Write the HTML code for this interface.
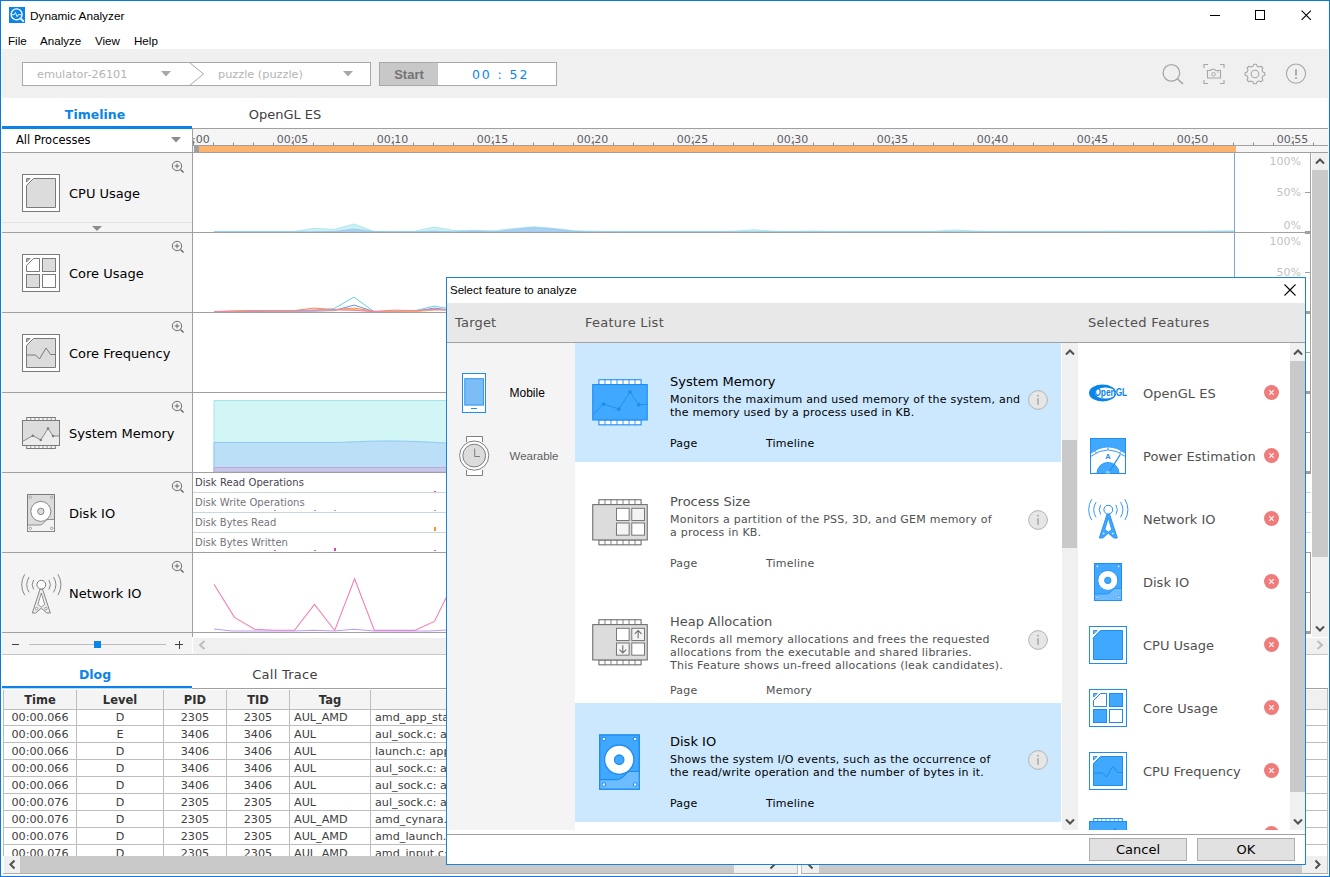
<!DOCTYPE html>
<html lang="en"><head><meta charset="utf-8"><title>Dynamic Analyzer</title>
<style>
html,body{margin:0;padding:0;background:#fff}
body{width:1330px;height:877px;position:relative;overflow:hidden;font-family:"DejaVu Sans","Liberation Sans",sans-serif}
.r{position:absolute}
.t{position:absolute;white-space:nowrap;line-height:1;font-family:"DejaVu Sans","Liberation Sans",sans-serif}
.s{font-family:"Liberation Sans","DejaVu Sans",sans-serif}
svg{overflow:visible;display:block}
.ov{overflow:hidden}
</style></head>
<body>
<div class="r" style="left:0px;top:0px;width:1330px;height:877px;background:#fff;"></div>
<svg style="position:absolute;left:9px;top:7px" width="16" height="16" viewBox="0 0 16 16" ><rect width="16" height="16" fill="#0a84e8"/><circle cx="7.6" cy="7.4" r="5.5" fill="none" stroke="#fff" stroke-width="1.3"/><path d="M11.8 11.6l3 3" stroke="#fff" stroke-width="1.7"/><path d="M2.4 7.7h3l1-2.2 1.7 4.2 1.2-2h3.4" fill="none" stroke="#fff" stroke-width="0.9"/></svg>
<div class="t s" style="left:30px;top:11px;font-size:11.8px;color:#000;">Dynamic Analyzer</div>
<div class="t s" style="left:8px;top:35px;font-size:11.6px;color:#000;">File</div>
<div class="t s" style="left:40px;top:35px;font-size:11.6px;color:#000;">Analyze</div>
<div class="t s" style="left:95px;top:35px;font-size:11.6px;color:#000;">View</div>
<div class="t s" style="left:134px;top:35px;font-size:11.6px;color:#000;">Help</div>
<svg style="position:absolute;left:1205px;top:5px" width="112" height="20" viewBox="0 0 112 20" ><path d="M5 10.5h10" stroke="#000" stroke-width="1"/><rect x="50.5" y="5.5" width="9" height="9" fill="none" stroke="#000" stroke-width="1"/><path d="M96.6 5.6l9.3 9.3M105.9 5.6l-9.3 9.3" stroke="#000" stroke-width="1.1"/></svg>
<div class="r" style="left:2px;top:49px;width:1326px;height:49px;background:#f0f0f0;"></div>
<div class="r" style="left:22px;top:62px;width:349px;height:24px;background:#fff;box-sizing:border-box;border:1px solid #a8a8a8"></div>
<svg style="position:absolute;left:186px;top:62px" width="24" height="24" viewBox="0 0 24 24" ><path d="M3.5 0.5L17.5 12L3.5 23.5" fill="none" stroke="#a8a8a8" stroke-width="1"/></svg>
<div class="t" style="left:37px;top:69px;font-size:11.3px;color:#b4b4b4;">emulator-26101</div>
<div class="t" style="left:218px;top:69px;font-size:11.3px;color:#b4b4b4;">puzzle (puzzle)</div>
<svg style="position:absolute;left:161px;top:71px" width="10" height="6" viewBox="0 0 10 6" ><path d="M0 0h10l-5 5.5z" fill="#a8a8a8"/></svg>
<svg style="position:absolute;left:343px;top:71px" width="10" height="6" viewBox="0 0 10 6" ><path d="M0 0h10l-5 5.5z" fill="#a8a8a8"/></svg>
<div class="r" style="left:379px;top:62px;width:178px;height:24px;background:#fff;box-sizing:border-box;border:1px solid #a8a8a8"></div>
<div class="r" style="left:380px;top:63px;width:58px;height:22px;background:#c8c8c8;"></div>
<div class="t s" style="left:380px;top:68px;font-size:13px;color:#747474;width:58px;text-align:center;font-weight:bold;">Start</div>
<div class="t" style="left:472px;top:69px;font-size:12.5px;color:#0a84e8;letter-spacing:1.9px;">00 : 52</div>
<svg style="position:absolute;left:1160px;top:62px" width="26" height="26" viewBox="0 0 26 26" ><circle cx="11.4" cy="10.9" r="8.3" fill="none" stroke="#a6a6a6" stroke-width="1.3"/><path d="M17.4 16.9L23 22" stroke="#a6a6a6" stroke-width="1.6"/></svg>
<svg style="position:absolute;left:1203px;top:63px" width="22" height="22" viewBox="0 0 22 22" ><path d="M1 5V1.5h4M17 1.5h4V5M21 17v3.5h-4M5 20.5H1V17" fill="none" stroke="#a6a6a6" stroke-width="1.1"/><path d="M4.5 7.5h3l1-1.2h3l1 1.2h5v7.5h-13z" fill="none" stroke="#a6a6a6" stroke-width="1.1"/><circle cx="10.5" cy="11.3" r="1.8" fill="none" stroke="#a6a6a6" stroke-width="1"/><path d="M14 9h1.6" stroke="#a6a6a6"/></svg>
<svg style="position:absolute;left:1243px;top:62px" width="24" height="24" viewBox="0 0 24 24" ><path d="M21.81 10.68L21.81 13.32L19.83 14.08L19.00 16.07L19.87 18.01L18.01 19.87L16.07 19.00L14.08 19.83L13.32 21.81L10.68 21.81L9.92 19.83L7.93 19.00L5.99 19.87L4.13 18.01L5.00 16.07L4.17 14.08L2.19 13.32L2.19 10.68L4.17 9.92L5.00 7.93L4.13 5.99L5.99 4.13L7.93 5.00L9.92 4.17L10.68 2.19L13.32 2.19L14.08 4.17L16.07 5.00L18.01 4.13L19.87 5.99L19.00 7.93L19.83 9.92z" fill="none" stroke="#a6a6a6" stroke-width="1.1" stroke-linejoin="round"/><circle cx="12" cy="12" r="3.8" fill="none" stroke="#a6a6a6" stroke-width="1.1"/></svg>
<svg style="position:absolute;left:1284px;top:62px" width="24" height="24" viewBox="0 0 24 24" ><circle cx="12" cy="11.6" r="9.6" fill="none" stroke="#a6a6a6" stroke-width="1.1"/><path d="M12 7.2v6.3" stroke="#a6a6a6" stroke-width="1.9"/><circle cx="12" cy="16" r="1.1" fill="#a6a6a6"/></svg>
<div class="t" style="left:0px;top:109px;font-size:12.5px;color:#0a84e8;width:190px;text-align:center;font-weight:bold;">Timeline</div>
<div class="t" style="left:190px;top:108px;font-size:13px;color:#404040;width:190px;text-align:center;">OpenGL ES</div>
<div class="r" style="left:2px;top:128px;width:1326px;height:1px;background:#a0a0a0;"></div>
<div class="r" style="left:2px;top:126px;width:190px;height:3px;background:#0a84e8;"></div>
<div class="r" style="left:193px;top:129px;width:1135px;height:23px;background:#f5f5f5;"></div>
<div class="r" style="left:193px;top:145px;width:1135px;height:1px;background:#a0a0a0;"></div>
<div class="r" style="left:194px;top:146px;width:5px;height:6px;background:#a0a0a0;"></div>
<div class="r" style="left:199px;top:146px;width:1037px;height:6px;background:#fdb36c;"></div>
<div class="r" style="left:2px;top:152px;width:1326px;height:1px;background:#a0a0a0;"></div>
<svg style="position:absolute;left:193px;top:129px" width="1135" height="17" viewBox="0 0 1135 17" ><path d="M0.5 11.5v5M20.5 13.5v3M40.5 13.5v3M60.5 13.5v3M80.5 13.5v3M100.5 11.5v5M120.5 13.5v3M140.5 13.5v3M160.5 13.5v3M180.5 13.5v3M200.5 11.5v5M220.5 13.5v3M240.5 13.5v3M260.5 13.5v3M280.5 13.5v3M300.5 11.5v5M320.5 13.5v3M340.5 13.5v3M360.5 13.5v3M380.5 13.5v3M400.5 11.5v5M420.5 13.5v3M440.5 13.5v3M460.5 13.5v3M480.5 13.5v3M500.5 11.5v5M520.5 13.5v3M540.5 13.5v3M560.5 13.5v3M580.5 13.5v3M600.5 11.5v5M620.5 13.5v3M640.5 13.5v3M660.5 13.5v3M680.5 13.5v3M700.5 11.5v5M720.5 13.5v3M740.5 13.5v3M760.5 13.5v3M780.5 13.5v3M800.5 11.5v5M820.5 13.5v3M840.5 13.5v3M860.5 13.5v3M880.5 13.5v3M900.5 11.5v5M920.5 13.5v3M940.5 13.5v3M960.5 13.5v3M980.5 13.5v3M1000.5 11.5v5M1020.5 13.5v3M1040.5 13.5v3M1060.5 13.5v3M1080.5 13.5v3M1100.5 11.5v5M1120.5 13.5v3" stroke="#909090" stroke-width="1" fill="none"/></svg>
<div class="t" style="left:192px;top:134px;font-size:11px;color:#5c5c66;">:00</div>
<div class="t" style="left:262.5px;top:134px;font-size:11px;color:#5c5c66;width:60px;text-align:center;">00;05</div>
<div class="t" style="left:362.5px;top:134px;font-size:11px;color:#5c5c66;width:60px;text-align:center;">00;10</div>
<div class="t" style="left:462.5px;top:134px;font-size:11px;color:#5c5c66;width:60px;text-align:center;">00;15</div>
<div class="t" style="left:562.5px;top:134px;font-size:11px;color:#5c5c66;width:60px;text-align:center;">00;20</div>
<div class="t" style="left:662.5px;top:134px;font-size:11px;color:#5c5c66;width:60px;text-align:center;">00;25</div>
<div class="t" style="left:762.5px;top:134px;font-size:11px;color:#5c5c66;width:60px;text-align:center;">00;30</div>
<div class="t" style="left:862.5px;top:134px;font-size:11px;color:#5c5c66;width:60px;text-align:center;">00;35</div>
<div class="t" style="left:962.5px;top:134px;font-size:11px;color:#5c5c66;width:60px;text-align:center;">00;40</div>
<div class="t" style="left:1062.5px;top:134px;font-size:11px;color:#5c5c66;width:60px;text-align:center;">00;45</div>
<div class="t" style="left:1162.5px;top:134px;font-size:11px;color:#5c5c66;width:60px;text-align:center;">00;50</div>
<div class="t" style="left:1262.5px;top:134px;font-size:11px;color:#5c5c66;width:60px;text-align:center;">00;55</div>
<div class="r" style="left:2px;top:129px;width:190px;height:23px;background:#fff;"></div>
<div class="t" style="left:16px;top:135px;font-size:11.5px;color:#000;">All Processes</div>
<svg style="position:absolute;left:171px;top:137px" width="10" height="6" viewBox="0 0 10 6" ><path d="M0 0h10l-5 5.5z" fill="#8c8c8c"/></svg>
<div class="r" style="left:2px;top:153px;width:190px;height:501px;background:#f4f4f4;"></div>
<div class="r" style="left:192px;top:129px;width:1px;height:508px;background:#a0a0a0;"></div>
<div class="r" style="left:2px;top:232px;width:1309px;height:1px;background:#a0a0a0;"></div>
<div class="t" style="left:69px;top:187px;font-size:13px;color:#000;">CPU Usage</div>
<svg style="position:absolute;left:171px;top:160px" width="14" height="14" viewBox="0 0 14 14" ><circle cx="6" cy="6" r="4.7" fill="none" stroke="#6a6a6a" stroke-width="1"/><path d="M3.6 6h4.8M6 3.6v4.8" stroke="#6a6a6a" stroke-width="1"/><path d="M9.5 9.5l3 3" stroke="#6a6a6a" stroke-width="1.4"/></svg>
<svg style="position:absolute;left:22px;top:174px" width="38" height="38" viewBox="0 0 38 38" ><rect x="0.5" y="0.5" width="37" height="37" fill="#fff" stroke="#7a7a7a"/><path d="M11.5 4.5H33.5V33.5H4.5V11.5z" fill="#dcdcdc" stroke="#7a7a7a"/><path d="M4.5 4.5h3.6l-3.6 3.6z" fill="#7a7a7a" fill-opacity="0.55" stroke="#7a7a7a" stroke-width="0.9"/></svg>
<div class="r" style="left:2px;top:312px;width:1309px;height:1px;background:#a0a0a0;"></div>
<div class="t" style="left:69px;top:267px;font-size:13px;color:#000;">Core Usage</div>
<svg style="position:absolute;left:171px;top:240px" width="14" height="14" viewBox="0 0 14 14" ><circle cx="6" cy="6" r="4.7" fill="none" stroke="#6a6a6a" stroke-width="1"/><path d="M3.6 6h4.8M6 3.6v4.8" stroke="#6a6a6a" stroke-width="1"/><path d="M9.5 9.5l3 3" stroke="#6a6a6a" stroke-width="1.4"/></svg>
<svg style="position:absolute;left:22px;top:254px" width="38" height="38" viewBox="0 0 38 38" ><rect x="0.5" y="0.5" width="37" height="37" fill="#fff" stroke="#7a7a7a"/><path d="M11.5 4.5H17.5V17.5H4.5V11.5z" fill="#fff" stroke="#7a7a7a"/><path d="M4.5 4.5h3.6l-3.6 3.6z" fill="#7a7a7a" fill-opacity="0.55" stroke="#7a7a7a" stroke-width="0.9"/><rect x="20.5" y="4.5" width="13" height="13" fill="#dcdcdc" stroke="#7a7a7a"/><rect x="4.5" y="20.5" width="13" height="13" fill="#dcdcdc" stroke="#7a7a7a"/><rect x="20.5" y="20.5" width="13" height="13" fill="#fff" stroke="#7a7a7a"/></svg>
<div class="r" style="left:2px;top:392px;width:1309px;height:1px;background:#a0a0a0;"></div>
<div class="t" style="left:69px;top:347px;font-size:13px;color:#000;">Core Frequency</div>
<svg style="position:absolute;left:171px;top:320px" width="14" height="14" viewBox="0 0 14 14" ><circle cx="6" cy="6" r="4.7" fill="none" stroke="#6a6a6a" stroke-width="1"/><path d="M3.6 6h4.8M6 3.6v4.8" stroke="#6a6a6a" stroke-width="1"/><path d="M9.5 9.5l3 3" stroke="#6a6a6a" stroke-width="1.4"/></svg>
<svg style="position:absolute;left:22px;top:334px" width="38" height="38" viewBox="0 0 38 38" ><rect x="0.5" y="0.5" width="37" height="37" fill="#fff" stroke="#7a7a7a"/><path d="M11.5 4.5H33.5V33.5H4.5V11.5z" fill="#dcdcdc" stroke="#7a7a7a"/><path d="M4.5 4.5h3.6l-3.6 3.6z" fill="#7a7a7a" fill-opacity="0.55" stroke="#7a7a7a" stroke-width="0.9"/><path d="M4.5 21H13.5L17.5 25L24 14L28.5 20.5H33.5" fill="none" stroke="#7a7a7a" stroke-width="1"/></svg>
<div class="r" style="left:2px;top:472px;width:1309px;height:1px;background:#a0a0a0;"></div>
<div class="t" style="left:69px;top:427px;font-size:13px;color:#000;">System Memory</div>
<svg style="position:absolute;left:171px;top:400px" width="14" height="14" viewBox="0 0 14 14" ><circle cx="6" cy="6" r="4.7" fill="none" stroke="#6a6a6a" stroke-width="1"/><path d="M3.6 6h4.8M6 3.6v4.8" stroke="#6a6a6a" stroke-width="1"/><path d="M9.5 9.5l3 3" stroke="#6a6a6a" stroke-width="1.4"/></svg>
<svg style="position:absolute;left:22px;top:417px" width="38" height="32" viewBox="0 0 38 32" ><rect x="4.7" y="0.50" width="28.6" height="3.0" fill="#f4f4f4" stroke="#7a7a7a" stroke-width="1.0"/><path d="M8.79 0.50v3.0" stroke="#7a7a7a" stroke-width="0.80"/><path d="M12.87 0.50v3.0" stroke="#7a7a7a" stroke-width="0.80"/><path d="M16.96 0.50v3.0" stroke="#7a7a7a" stroke-width="0.80"/><path d="M21.04 0.50v3.0" stroke="#7a7a7a" stroke-width="0.80"/><path d="M25.13 0.50v3.0" stroke="#7a7a7a" stroke-width="0.80"/><path d="M29.21 0.50v3.0" stroke="#7a7a7a" stroke-width="0.80"/><rect x="4.7" y="28.50" width="28.6" height="3.0" fill="#f4f4f4" stroke="#7a7a7a" stroke-width="1.0"/><path d="M8.79 28.50v3.0" stroke="#7a7a7a" stroke-width="0.80"/><path d="M12.87 28.50v3.0" stroke="#7a7a7a" stroke-width="0.80"/><path d="M16.96 28.50v3.0" stroke="#7a7a7a" stroke-width="0.80"/><path d="M21.04 28.50v3.0" stroke="#7a7a7a" stroke-width="0.80"/><path d="M25.13 28.50v3.0" stroke="#7a7a7a" stroke-width="0.80"/><path d="M29.21 28.50v3.0" stroke="#7a7a7a" stroke-width="0.80"/><rect x="0.5" y="3.50" width="37" height="25.0" fill="#dcdcdc" stroke="#7a7a7a" stroke-width="1.0"/><path d="M0.5 24.50L10.8 18.70L18.8 23.00L26 11.50L31 19.00L37.5 19.00L37.5 28.50L0.5 28.50z" fill="#ececec"/><rect x="0.5" y="3.50" width="37" height="25.0" fill="none" stroke="#7a7a7a" stroke-width="1.0"/><path d="M0.5 24.50L10.8 18.70L18.8 23.00L26 11.50L31 19.00L37.5 19.00" fill="none" stroke="#7a7a7a" stroke-width="0.85"/><circle cx="10.8" cy="18.70" r="1.25" fill="#7a7a7a"/><circle cx="18.8" cy="23.00" r="1.25" fill="#7a7a7a"/><circle cx="26" cy="11.50" r="1.25" fill="#7a7a7a"/><circle cx="31" cy="19.00" r="1.25" fill="#7a7a7a"/></svg>
<div class="r" style="left:2px;top:552px;width:1309px;height:1px;background:#a0a0a0;"></div>
<div class="t" style="left:69px;top:507px;font-size:13px;color:#000;">Disk IO</div>
<svg style="position:absolute;left:171px;top:480px" width="14" height="14" viewBox="0 0 14 14" ><circle cx="6" cy="6" r="4.7" fill="none" stroke="#6a6a6a" stroke-width="1"/><path d="M3.6 6h4.8M6 3.6v4.8" stroke="#6a6a6a" stroke-width="1"/><path d="M9.5 9.5l3 3" stroke="#6a6a6a" stroke-width="1.4"/></svg>
<svg style="position:absolute;left:27px;top:494px" width="28" height="38" viewBox="0 0 28 38" ><rect x="0.5" y="0.5" width="27" height="37" fill="#dcdcdc" stroke="#7a7a7a"/><path d="M27.5 25.5H21C18 25.5 17.5 31 12 31H0.5V37.5H27.5z" fill="#f2f2f2" stroke="#7a7a7a" stroke-width="0.8"/><circle cx="13.8" cy="17.4" r="10" fill="#fff" stroke="#7a7a7a" stroke-width="0.9"/><circle cx="13.8" cy="17.4" r="3.2" fill="#dcdcdc" stroke="#7a7a7a" stroke-width="0.9"/><circle cx="3.3" cy="3.3" r="1.2" fill="#fff" stroke="#7a7a7a" stroke-width="0.7"/><circle cx="24.7" cy="3.3" r="1.2" fill="#fff" stroke="#7a7a7a" stroke-width="0.7"/><circle cx="3.3" cy="34.3" r="1.2" fill="#fff" stroke="#7a7a7a" stroke-width="0.7"/><circle cx="24.7" cy="34.3" r="1.2" fill="#fff" stroke="#7a7a7a" stroke-width="0.7"/></svg>
<div class="r" style="left:2px;top:632px;width:1309px;height:1px;background:#a0a0a0;"></div>
<div class="t" style="left:69px;top:587px;font-size:13px;color:#000;">Network IO</div>
<svg style="position:absolute;left:171px;top:560px" width="14" height="14" viewBox="0 0 14 14" ><circle cx="6" cy="6" r="4.7" fill="none" stroke="#6a6a6a" stroke-width="1"/><path d="M3.6 6h4.8M6 3.6v4.8" stroke="#6a6a6a" stroke-width="1"/><path d="M9.5 9.5l3 3" stroke="#6a6a6a" stroke-width="1.4"/></svg>
<svg style="position:absolute;left:20.5px;top:574px" width="41" height="40" viewBox="0 0 41 40" ><path d="M12.67 5.93A9.0 9.0 0 0 0 12.67 15.47" fill="none" stroke="#7a7a7a" stroke-width="0.9"/><path d="M27.93 5.93A9.0 9.0 0 0 1 27.93 15.47" fill="none" stroke="#7a7a7a" stroke-width="0.9"/><path d="M8.09 3.07A14.4 14.4 0 0 0 8.09 18.33" fill="none" stroke="#7a7a7a" stroke-width="0.9"/><path d="M32.51 3.07A14.4 14.4 0 0 1 32.51 18.33" fill="none" stroke="#7a7a7a" stroke-width="0.9"/><path d="M3.68 0.31A19.6 19.6 0 0 0 3.68 21.09" fill="none" stroke="#7a7a7a" stroke-width="0.9"/><path d="M36.92 0.31A19.6 19.6 0 0 1 36.92 21.09" fill="none" stroke="#7a7a7a" stroke-width="0.9"/><path d="M19.1 15L11.3 39H14.700000000000001L20.3 34.2L25.9 39H29.3L21.5 15z" fill="#ececec" stroke="#7a7a7a" stroke-width="0.9" stroke-linejoin="round"/><path d="M20.3 19L16.900000000000002 30.5L20.3 33L23.7 30.5z" fill="#fff" stroke="#7a7a7a" stroke-width="0.8" stroke-linejoin="round"/><circle cx="15.700000000000001" cy="34.6" r="1.25" fill="#fff" stroke="#7a7a7a" stroke-width="0.7"/><circle cx="24.9" cy="34.6" r="1.25" fill="#fff" stroke="#7a7a7a" stroke-width="0.7"/><circle cx="20.3" cy="10.7" r="4.4" fill="#fff" stroke="#7a7a7a" stroke-width="1"/></svg>
<div class="r" style="left:2px;top:222px;width:190px;height:1px;background:#e2e2e2;"></div>
<svg style="position:absolute;left:92px;top:226px" width="10" height="5" viewBox="0 0 10 5" ><path d="M0 0h10l-5 5z" fill="#8c8c8c"/></svg>
<svg style="position:absolute;left:0px;top:0px" width="1330" height="877" viewBox="0 0 1330 877" class="ov"><path d="M214 232L214 231.4L234 231.4L254 231.4L274 231.4L294 231.4L314 228.4L334 229.4L354 224.0L374 231.4L394 231.4L414 231.4L434 227.0L454 230.5L474 230.4L494 230.8L514 228.5L534 226.8L554 228.4L574 230.8L594 231.2L614 231.4L634 231.4L654 231.4L674 231.4L694 231.4L714 231.4L734 231.2L754 229.8L774 231.2L794 231.4L814 231.0L834 231.4L854 231.4L874 231.4L894 231.4L914 231.4L934 231.4L954 230.0L974 231.0L994 231.4L1014 231.4L1034 231.4L1054 231.4L1074 231.4L1094 231.4L1114 231.1L1134 231.4L1154 231.4L1174 231.4L1194 231.4L1214 231.0L1234 230.8L1234 232z" fill="#c8f0f0" fill-opacity="0.9" stroke="#9fe3e6" stroke-width="0.8"/><path d="M214 232L214 232.0L234 232.0L254 232.0L274 232.0L294 232.0L314 232.0L334 231.4L354 229.0L374 231.6L394 232.0L414 232.0L434 231.0L454 232.0L474 230.8L494 232.0L514 229.4L534 227.4L554 229.0L574 231.2L594 232.0L614 232.0L634 232.0L654 232.0L674 232.0L694 232.0L714 232.0L734 232.0L754 232.0L774 232.0L794 232.0L814 232.0L834 232.0L854 232.0L874 232.0L894 232.0L914 232.0L934 232.0L954 232.0L974 232.0L994 232.0L1014 232.0L1034 232.0L1054 232.0L1074 232.0L1094 232.0L1114 232.0L1134 232.0L1154 232.0L1174 232.0L1194 232.0L1214 232.0L1234 232.0L1234 232z" fill="#a8cdf0" fill-opacity="0.9" stroke="#90bdf0" stroke-width="0.6"/><path d="M214 311.6L234 311.4L254 311.1L274 311.1L294 311.1L314 310.4L334 308.6L354 297.1L374 311.6L394 311.1L414 311.0L434 306.1L454 309.6L474 310.6L494 310.1L514 307.6L534 305.6L554 307.6L574 310.6" fill="none" stroke="#5fd4dc" stroke-width="1"/><path d="M214 311.6L234 311.6L254 311.4L274 311.1L294 311.1L314 311.1L334 310.6L354 305.1L374 311.6L394 311.6L414 311.6L434 308.1L454 310.6L474 309.6L494 310.6L514 308.6L534 306.6L554 309.6L574 310.6" fill="none" stroke="#6c8df0" stroke-width="1"/><path d="M214 311.4L234 311.1L254 310.6L274 310.6L294 310.6L314 308.1L334 309.6L354 308.1L374 311.2L394 311.6L414 311.6L434 309.1L454 310.6L474 310.6L494 309.6L514 309.6L534 308.6L554 309.6L574 311.1" fill="none" stroke="#f08c50" stroke-width="1"/><path d="M214 311.6L234 311.3L254 311.0L274 311.0L294 311.0L314 310.1L334 310.1L354 309.6L374 311.6L394 311.1L414 311.6L434 310.1L454 309.6L474 310.6L494 310.6L514 309.6L534 309.6L554 310.6L574 311.1" fill="none" stroke="#f6b23c" stroke-width="1"/><path d="M214 311.8L234 311.1L254 310.6L274 310.6L294 310.6L314 310.1L334 309.6L354 310.4L374 311.6L394 310.1L414 310.6L434 309.6L454 310.1L474 310.6L494 310.6L514 310.1L534 309.6L554 310.6L574 311.1" fill="none" stroke="#f080c0" stroke-width="1"/><path d="M214 472V400.5H460V472z" fill="#d2f5f5" stroke="#a5e6e8" stroke-width="1"/><path d="M214 472V442.5H330C350 442.5 360 441 390 441C410 441 430 442 460 444V472z" fill="#badff6" stroke="#92c8f2" stroke-width="1"/><path d="M214 472V467.5H460V472z" fill="#c5c8e8" stroke="#c0a8d8" stroke-width="1"/><path d="M214 584.2L234.5 617.4L254.5 629.2L274 630.3L294.5 630.3L314.5 604.3L334.7 630.5L354.6 578.7L374.4 630.4L394 630.4L414.6 630.4L434.4 621.4L454 582" fill="none" stroke="#f27fb4" stroke-width="1.1"/><path d="M214 629L232 631L294 631L314 630.2L334 631L354 629.3L374 631L430 631L454 629.5" fill="none" stroke="#c09af4" stroke-width="1.05"/></svg>
<div class="r" style="left:193px;top:232px;width:1118px;height:1px;background:#a0a0a0;"></div>
<div class="r" style="left:193px;top:312px;width:1118px;height:1px;background:#a0a0a0;"></div>
<div class="r" style="left:193px;top:392px;width:1118px;height:1px;background:#a0a0a0;"></div>
<div class="r" style="left:193px;top:472px;width:1118px;height:1px;background:#a0a0a0;"></div>
<div class="r" style="left:193px;top:552px;width:1118px;height:1px;background:#a0a0a0;"></div>
<div class="r" style="left:193px;top:632px;width:1118px;height:1px;background:#a0a0a0;"></div>
<div class="r" style="left:193px;top:492px;width:1118px;height:1px;background:#c9d6dd;"></div>
<div class="t" style="left:195px;top:478px;font-size:10px;color:#45454f;letter-spacing:0.05px;">Disk Read Operations</div>
<div class="r" style="left:193px;top:512px;width:1118px;height:1px;background:#c9d6dd;"></div>
<div class="t" style="left:195px;top:498px;font-size:10px;color:#74747c;letter-spacing:0.02px;">Disk Write Operations</div>
<div class="r" style="left:193px;top:532px;width:1118px;height:1px;background:#c9d6dd;"></div>
<div class="t" style="left:195px;top:518px;font-size:10px;color:#74747c;letter-spacing:0.02px;">Disk Bytes Read</div>
<div class="t" style="left:195px;top:538px;font-size:10px;color:#74747c;letter-spacing:0.02px;">Disk Bytes Written</div>
<div class="r" style="left:434px;top:491px;width:2px;height:1px;background:#e0508c;"></div>
<div class="r" style="left:274px;top:510px;width:2px;height:1px;background:#b98cf2;"></div>
<div class="r" style="left:314px;top:510px;width:2px;height:1px;background:#b98cf2;"></div>
<div class="r" style="left:334px;top:510px;width:2px;height:1px;background:#b98cf2;"></div>
<div class="r" style="left:434px;top:510px;width:2px;height:1px;background:#b98cf2;"></div>
<div class="r" style="left:434px;top:527px;width:2px;height:4px;background:#f6962c;"></div>
<div class="r" style="left:274px;top:550px;width:2px;height:1px;background:#e060c0;"></div>
<div class="r" style="left:314px;top:550px;width:2px;height:1px;background:#e060c0;"></div>
<div class="r" style="left:334px;top:548px;width:2px;height:3px;background:#e040b0;"></div>
<div class="r" style="left:434px;top:550px;width:2px;height:1px;background:#e060c0;"></div>
<div class="r" style="left:1234px;top:153px;width:1px;height:480px;background:#7ba9d3;"></div>
<div class="r" style="left:1310px;top:153px;width:1px;height:320px;background:#a0a0a0;"></div>
<div class="r" style="left:1310px;top:553px;width:1px;height:80px;background:#a0a0a0;"></div>
<div class="t" style="left:1241px;top:156px;font-size:11px;color:#c2c2c2;width:60px;text-align:right;">100%</div>
<div class="t" style="left:1241px;top:187px;font-size:11px;color:#c2c2c2;width:60px;text-align:right;">50%</div>
<div class="t" style="left:1241px;top:220px;font-size:11px;color:#c2c2c2;width:60px;text-align:right;">0%</div>
<div class="r" style="left:1305px;top:192px;width:5px;height:1px;background:#a0a0a0;"></div>
<div class="r" style="left:1305px;top:231px;width:6px;height:3px;background:#a0a0a0;"></div>
<div class="t" style="left:1241px;top:236px;font-size:11px;color:#c2c2c2;width:60px;text-align:right;">100%</div>
<div class="t" style="left:1241px;top:267px;font-size:11px;color:#c2c2c2;width:60px;text-align:right;">50%</div>
<div class="t" style="left:1241px;top:300px;font-size:11px;color:#c2c2c2;width:60px;text-align:right;">0%</div>
<div class="r" style="left:1305px;top:272px;width:5px;height:1px;background:#a0a0a0;"></div>
<div class="r" style="left:1305px;top:311px;width:6px;height:3px;background:#a0a0a0;"></div>
<div class="t" style="left:1241px;top:316px;font-size:11px;color:#c2c2c2;width:60px;text-align:right;">100%</div>
<div class="t" style="left:1241px;top:347px;font-size:11px;color:#c2c2c2;width:60px;text-align:right;">50%</div>
<div class="t" style="left:1241px;top:380px;font-size:11px;color:#c2c2c2;width:60px;text-align:right;">0%</div>
<div class="r" style="left:1305px;top:352px;width:5px;height:1px;background:#a0a0a0;"></div>
<div class="r" style="left:1305px;top:391px;width:6px;height:3px;background:#a0a0a0;"></div>
<div class="t" style="left:1241px;top:396px;font-size:11px;color:#c2c2c2;width:60px;text-align:right;">100%</div>
<div class="t" style="left:1241px;top:427px;font-size:11px;color:#c2c2c2;width:60px;text-align:right;">50%</div>
<div class="t" style="left:1241px;top:460px;font-size:11px;color:#c2c2c2;width:60px;text-align:right;">0%</div>
<div class="r" style="left:1305px;top:432px;width:5px;height:1px;background:#a0a0a0;"></div>
<div class="r" style="left:1305px;top:471px;width:6px;height:3px;background:#a0a0a0;"></div>
<div class="t" style="left:1241px;top:556px;font-size:11px;color:#c2c2c2;width:60px;text-align:right;">100%</div>
<div class="t" style="left:1241px;top:587px;font-size:11px;color:#c2c2c2;width:60px;text-align:right;">50%</div>
<div class="t" style="left:1241px;top:620px;font-size:11px;color:#c2c2c2;width:60px;text-align:right;">0%</div>
<div class="r" style="left:1305px;top:592px;width:5px;height:1px;background:#a0a0a0;"></div>
<div class="r" style="left:1305px;top:631px;width:6px;height:3px;background:#a0a0a0;"></div>
<div class="r" style="left:1312px;top:153px;width:16px;height:484px;background:#f0f0f0;"></div>
<div class="r" style="left:1312px;top:170px;width:16px;height:387px;background:#c9c9c9;"></div>
<svg style="position:absolute;left:1315px;top:157px" width="10" height="8" viewBox="0 0 10 8" ><path d="M1 6.5L5 2.5L9 6.5" fill="none" stroke="#505050" stroke-width="2"/></svg>
<svg style="position:absolute;left:1315px;top:624.5px" width="10" height="8" viewBox="0 0 10 8" ><path d="M1 1.5L5 5.5L9 1.5" fill="none" stroke="#505050" stroke-width="2"/></svg>
<div class="r" style="left:193px;top:638px;width:1135px;height:16px;background:#f0f0f0;"></div>
<div class="r" style="left:2px;top:654px;width:1326px;height:1px;background:#c6c6c6;"></div>
<div class="r" style="left:12px;top:644px;width:7px;height:1px;background:#404040;"></div>
<div class="r" style="left:29px;top:644px;width:137px;height:1px;background:#bcbcbc;"></div>
<div class="r" style="left:94px;top:641px;width:7px;height:7px;background:#0a84e8;"></div>
<div class="r" style="left:175px;top:644px;width:8px;height:1px;background:#404040;"></div>
<div class="r" style="left:178.5px;top:640.5px;width:1px;height:8px;background:#404040;"></div>
<svg style="position:absolute;left:198px;top:640px" width="8" height="10" viewBox="0 0 8 10" ><path d="M6.5 1L2 5L6.5 9" fill="none" stroke="#bdbdbd" stroke-width="2"/></svg>
<svg style="position:absolute;left:1316px;top:640px" width="8" height="10" viewBox="0 0 8 10" ><path d="M1.5 1L6 5L1.5 9" fill="none" stroke="#bdbdbd" stroke-width="2"/></svg>
<div class="t" style="left:0px;top:669px;font-size:12.5px;color:#0a84e8;width:190px;text-align:center;font-weight:bold;">Dlog</div>
<div class="t" style="left:190px;top:668px;font-size:13px;color:#404040;width:190px;text-align:center;letter-spacing:0.25px;">Call Trace</div>
<div class="r" style="left:192px;top:688px;width:606px;height:1px;background:#a0a0a0;"></div>
<div class="r" style="left:2px;top:686px;width:190px;height:2px;background:#0a84e8;"></div>
<div class="r" style="left:2px;top:688px;width:190px;height:1px;background:#b9dbf8;"></div>
<div class="r" style="left:3px;top:690px;width:795px;height:19px;background:#f4f4f4;"></div>
<div class="r" style="left:3px;top:690px;width:1px;height:166px;background:#bdbdbd;"></div>
<div class="r" style="left:76px;top:690px;width:1px;height:166px;background:#bdbdbd;"></div>
<div class="r" style="left:163px;top:690px;width:1px;height:166px;background:#bdbdbd;"></div>
<div class="r" style="left:226px;top:690px;width:1px;height:166px;background:#bdbdbd;"></div>
<div class="r" style="left:289px;top:690px;width:1px;height:166px;background:#bdbdbd;"></div>
<div class="r" style="left:370px;top:690px;width:1px;height:166px;background:#bdbdbd;"></div>
<div class="r" style="left:797px;top:689px;width:1px;height:185px;background:#bdbdbd;"></div>
<div class="r" style="left:3px;top:709px;width:795px;height:1px;background:#bdbdbd;"></div>
<div class="r" style="left:3px;top:725px;width:795px;height:1px;background:#bdbdbd;"></div>
<div class="r" style="left:3px;top:742px;width:795px;height:1px;background:#bdbdbd;"></div>
<div class="r" style="left:3px;top:759px;width:795px;height:1px;background:#bdbdbd;"></div>
<div class="r" style="left:3px;top:776px;width:795px;height:1px;background:#bdbdbd;"></div>
<div class="r" style="left:3px;top:793px;width:795px;height:1px;background:#bdbdbd;"></div>
<div class="r" style="left:3px;top:810px;width:795px;height:1px;background:#bdbdbd;"></div>
<div class="r" style="left:3px;top:827px;width:795px;height:1px;background:#bdbdbd;"></div>
<div class="r" style="left:3px;top:844px;width:795px;height:1px;background:#bdbdbd;"></div>
<div class="t" style="left:4px;top:695px;font-size:11.5px;color:#303030;width:72px;text-align:center;font-weight:bold;">Time</div>
<div class="t" style="left:77px;top:695px;font-size:11.5px;color:#303030;width:86px;text-align:center;font-weight:bold;">Level</div>
<div class="t" style="left:164px;top:695px;font-size:11.5px;color:#303030;width:62px;text-align:center;font-weight:bold;">PID</div>
<div class="t" style="left:227px;top:695px;font-size:11.5px;color:#303030;width:62px;text-align:center;font-weight:bold;">TID</div>
<div class="t" style="left:290px;top:695px;font-size:11.5px;color:#303030;width:80px;text-align:center;font-weight:bold;">Tag</div>
<div class="r" style="left:3px;top:709px;width:795px;height:147px;overflow:hidden"><div class="t" style="left:1px;top:3px;font-size:11.2px;color:#404040;width:72px;text-align:center;">00:00.066</div><div class="t" style="left:74px;top:3px;font-size:11.2px;color:#404040;width:86px;text-align:center;">D</div><div class="t" style="left:161px;top:3px;font-size:11.2px;color:#404040;width:62px;text-align:center;">2305</div><div class="t" style="left:224px;top:3px;font-size:11.2px;color:#404040;width:62px;text-align:center;">2305</div><div class="t" style="left:291px;top:3px;font-size:11.2px;color:#404040;">AUL_AMD</div><div class="t" style="left:372px;top:3px;font-size:11.2px;color:#404040;">amd_app_status.c: app status</div><div class="t" style="left:1px;top:20px;font-size:11.2px;color:#404040;width:72px;text-align:center;">00:00.066</div><div class="t" style="left:74px;top:20px;font-size:11.2px;color:#404040;width:86px;text-align:center;">E</div><div class="t" style="left:161px;top:20px;font-size:11.2px;color:#404040;width:62px;text-align:center;">3406</div><div class="t" style="left:224px;top:20px;font-size:11.2px;color:#404040;width:62px;text-align:center;">3406</div><div class="t" style="left:291px;top:20px;font-size:11.2px;color:#404040;">AUL</div><div class="t" style="left:372px;top:20px;font-size:11.2px;color:#404040;">aul_sock.c: aul_sock_send_raw</div><div class="t" style="left:1px;top:37px;font-size:11.2px;color:#404040;width:72px;text-align:center;">00:00.066</div><div class="t" style="left:74px;top:37px;font-size:11.2px;color:#404040;width:86px;text-align:center;">D</div><div class="t" style="left:161px;top:37px;font-size:11.2px;color:#404040;width:62px;text-align:center;">3406</div><div class="t" style="left:224px;top:37px;font-size:11.2px;color:#404040;width:62px;text-align:center;">3406</div><div class="t" style="left:291px;top:37px;font-size:11.2px;color:#404040;">AUL</div><div class="t" style="left:372px;top:37px;font-size:11.2px;color:#404040;">launch.c: app_request_to_launchpad</div><div class="t" style="left:1px;top:54px;font-size:11.2px;color:#404040;width:72px;text-align:center;">00:00.066</div><div class="t" style="left:74px;top:54px;font-size:11.2px;color:#404040;width:86px;text-align:center;">D</div><div class="t" style="left:161px;top:54px;font-size:11.2px;color:#404040;width:62px;text-align:center;">3406</div><div class="t" style="left:224px;top:54px;font-size:11.2px;color:#404040;width:62px;text-align:center;">3406</div><div class="t" style="left:291px;top:54px;font-size:11.2px;color:#404040;">AUL</div><div class="t" style="left:372px;top:54px;font-size:11.2px;color:#404040;">aul_sock.c: aul_sock_create_client</div><div class="t" style="left:1px;top:71px;font-size:11.2px;color:#404040;width:72px;text-align:center;">00:00.066</div><div class="t" style="left:74px;top:71px;font-size:11.2px;color:#404040;width:86px;text-align:center;">D</div><div class="t" style="left:161px;top:71px;font-size:11.2px;color:#404040;width:62px;text-align:center;">3406</div><div class="t" style="left:224px;top:71px;font-size:11.2px;color:#404040;width:62px;text-align:center;">3406</div><div class="t" style="left:291px;top:71px;font-size:11.2px;color:#404040;">AUL</div><div class="t" style="left:372px;top:71px;font-size:11.2px;color:#404040;">aul_sock.c: aul_sock_send_raw</div><div class="t" style="left:1px;top:88px;font-size:11.2px;color:#404040;width:72px;text-align:center;">00:00.076</div><div class="t" style="left:74px;top:88px;font-size:11.2px;color:#404040;width:86px;text-align:center;">D</div><div class="t" style="left:161px;top:88px;font-size:11.2px;color:#404040;width:62px;text-align:center;">2305</div><div class="t" style="left:224px;top:88px;font-size:11.2px;color:#404040;width:62px;text-align:center;">2305</div><div class="t" style="left:291px;top:88px;font-size:11.2px;color:#404040;">AUL</div><div class="t" style="left:372px;top:88px;font-size:11.2px;color:#404040;">aul_sock.c: aul_sock_recv</div><div class="t" style="left:1px;top:105px;font-size:11.2px;color:#404040;width:72px;text-align:center;">00:00.076</div><div class="t" style="left:74px;top:105px;font-size:11.2px;color:#404040;width:86px;text-align:center;">D</div><div class="t" style="left:161px;top:105px;font-size:11.2px;color:#404040;width:62px;text-align:center;">2305</div><div class="t" style="left:224px;top:105px;font-size:11.2px;color:#404040;width:62px;text-align:center;">2305</div><div class="t" style="left:291px;top:105px;font-size:11.2px;color:#404040;">AUL_AMD</div><div class="t" style="left:372px;top:105px;font-size:11.2px;color:#404040;">amd_cynara.c: check privilege</div><div class="t" style="left:1px;top:122px;font-size:11.2px;color:#404040;width:72px;text-align:center;">00:00.076</div><div class="t" style="left:74px;top:122px;font-size:11.2px;color:#404040;width:86px;text-align:center;">D</div><div class="t" style="left:161px;top:122px;font-size:11.2px;color:#404040;width:62px;text-align:center;">2305</div><div class="t" style="left:224px;top:122px;font-size:11.2px;color:#404040;width:62px;text-align:center;">2305</div><div class="t" style="left:291px;top:122px;font-size:11.2px;color:#404040;">AUL_AMD</div><div class="t" style="left:372px;top:122px;font-size:11.2px;color:#404040;">amd_launch.c: launch request</div><div class="t" style="left:1px;top:139px;font-size:11.2px;color:#404040;width:72px;text-align:center;">00:00.076</div><div class="t" style="left:74px;top:139px;font-size:11.2px;color:#404040;width:86px;text-align:center;">D</div><div class="t" style="left:161px;top:139px;font-size:11.2px;color:#404040;width:62px;text-align:center;">2305</div><div class="t" style="left:224px;top:139px;font-size:11.2px;color:#404040;width:62px;text-align:center;">2305</div><div class="t" style="left:291px;top:139px;font-size:11.2px;color:#404040;">AUL_AMD</div><div class="t" style="left:372px;top:139px;font-size:11.2px;color:#404040;">amd_input.c: input lock</div></div>
<div class="r" style="left:802px;top:688px;width:526px;height:1px;background:#a0a0a0;"></div>
<div class="r" style="left:802px;top:690px;width:525px;height:19px;background:#f0f0f0;"></div>
<div class="r" style="left:801px;top:689px;width:1px;height:185px;background:#bdbdbd;"></div>
<div class="r" style="left:1327px;top:689px;width:1px;height:185px;background:#bdbdbd;"></div>
<div class="r" style="left:802px;top:709px;width:525px;height:1px;background:#bdbdbd;"></div>
<div class="r" style="left:802px;top:725px;width:525px;height:1px;background:#bdbdbd;"></div>
<div class="r" style="left:802px;top:742px;width:525px;height:1px;background:#bdbdbd;"></div>
<div class="r" style="left:802px;top:759px;width:525px;height:1px;background:#bdbdbd;"></div>
<div class="r" style="left:802px;top:776px;width:525px;height:1px;background:#bdbdbd;"></div>
<div class="r" style="left:802px;top:793px;width:525px;height:1px;background:#bdbdbd;"></div>
<div class="r" style="left:802px;top:810px;width:525px;height:1px;background:#bdbdbd;"></div>
<div class="r" style="left:802px;top:827px;width:525px;height:1px;background:#bdbdbd;"></div>
<div class="r" style="left:802px;top:844px;width:525px;height:1px;background:#bdbdbd;"></div>
<div class="r" style="left:4px;top:856px;width:793px;height:17px;background:#f0f0f0;"></div>
<div class="r" style="left:802px;top:856px;width:525px;height:17px;background:#f0f0f0;"></div>
<div class="r" style="left:20px;top:856px;width:714px;height:17px;background:#c9c9c9;"></div>
<div class="r" style="left:819px;top:856px;width:483px;height:17px;background:#c9c9c9;"></div>
<div class="r" style="left:3px;top:873px;width:795px;height:1px;background:#b0b0b0;"></div>
<div class="r" style="left:801px;top:873px;width:527px;height:1px;background:#b0b0b0;"></div>
<svg style="position:absolute;left:8px;top:859px" width="8" height="11" viewBox="0 0 8 11" ><path d="M6.5 1.5L2.5 5.5L6.5 9.5" fill="none" stroke="#505050" stroke-width="2"/></svg>
<svg style="position:absolute;left:806px;top:859px" width="8" height="11" viewBox="0 0 8 11" ><path d="M6.5 1.5L2.5 5.5L6.5 9.5" fill="none" stroke="#505050" stroke-width="2"/></svg>
<svg style="position:absolute;left:769px;top:859px" width="8" height="11" viewBox="0 0 8 11" ><path d="M1.5 1.5L5.5 5.5L1.5 9.5" fill="none" stroke="#505050" stroke-width="2"/></svg>
<svg style="position:absolute;left:1314px;top:859px" width="8" height="11" viewBox="0 0 8 11" ><path d="M1.5 1.5L5.5 5.5L1.5 9.5" fill="none" stroke="#505050" stroke-width="2"/></svg>
<div class="r" style="left:446px;top:277px;width:858px;height:586px;background:#fff;border:1px solid #1883d7"><div class="t s" style="left:3px;top:7px;font-size:11.5px;color:#000;">Select feature to analyze</div>
<svg style="position:absolute;left:837px;top:6px" width="12" height="12" viewBox="0 0 12 12" ><path d="M0.5 0.5l11 11M11.5 0.5l-11 11" stroke="#000" stroke-width="1.1"/></svg>
<div class="r" style="left:0px;top:25px;width:858px;height:39px;background:#e8e8e8;"></div>
<div class="r" style="left:0px;top:64px;width:858px;height:1px;background:#a0a0a0;"></div>
<div class="t" style="left:8px;top:38px;font-size:13px;color:#505050;letter-spacing:0.2px;">Target</div>
<div class="t" style="left:138px;top:38px;font-size:13px;color:#505050;letter-spacing:0.25px;">Feature List</div>
<div class="t" style="left:641px;top:38px;font-size:13px;color:#505050;letter-spacing:0.3px;">Selected Features</div>
<div class="r" style="left:0px;top:65px;width:128px;height:487px;background:#f4f4f4;"></div>
<svg style="position:absolute;left:15px;top:95px" width="24" height="40" viewBox="0 0 24 40" ><rect x="0.5" y="0.5" width="23" height="39" fill="#fff" stroke="#1e8df2"/><rect x="2.8" y="5.7" width="18.6" height="26.4" fill="#7dbdf6" stroke="#1e8df2" stroke-width="0.9"/><path d="M9 35.5h6" stroke="#1e8df2" stroke-width="1"/></svg>
<div class="t s" style="left:62.5px;top:109px;font-size:12px;color:#000;">Mobile</div>
<svg style="position:absolute;left:12px;top:158px" width="30" height="40" viewBox="0 0 30 40" ><path d="M7.5 6V0.5H23.5V6M7.5 34V39.5H23.5V34" fill="#fff" stroke="#707070" stroke-width="0.9"/><circle cx="15.2" cy="19.6" r="14.6" fill="#fff" stroke="#707070" stroke-width="0.9"/><circle cx="15.2" cy="19.6" r="11.4" fill="#dcdcdc" stroke="#707070" stroke-width="0.9"/><path d="M15.7 12.5V20.5H21" fill="none" stroke="#707070" stroke-width="0.9"/></svg>
<div class="t s" style="left:62.5px;top:173px;font-size:11.5px;color:#5e5e5e;">Wearable</div>
<div class="r" style="left:128px;top:65px;width:486px;height:119px;background:#cce8ff;"></div>
<svg style="position:absolute;left:145px;top:100.60000000000002px" width="56" height="46.87" viewBox="0 0 38 31.8" ><rect x="4.7" y="0.50" width="28.6" height="3.3" fill="#fff" stroke="#1e8df2" stroke-width="0.75"/><path d="M8.79 0.50v3.3" stroke="#1e8df2" stroke-width="0.60"/><path d="M12.87 0.50v3.3" stroke="#1e8df2" stroke-width="0.60"/><path d="M16.96 0.50v3.3" stroke="#1e8df2" stroke-width="0.60"/><path d="M21.04 0.50v3.3" stroke="#1e8df2" stroke-width="0.60"/><path d="M25.13 0.50v3.3" stroke="#1e8df2" stroke-width="0.60"/><path d="M29.21 0.50v3.3" stroke="#1e8df2" stroke-width="0.60"/><rect x="4.7" y="27.80" width="28.6" height="3.3" fill="#fff" stroke="#1e8df2" stroke-width="0.75"/><path d="M8.79 27.80v3.3" stroke="#1e8df2" stroke-width="0.60"/><path d="M12.87 27.80v3.3" stroke="#1e8df2" stroke-width="0.60"/><path d="M16.96 27.80v3.3" stroke="#1e8df2" stroke-width="0.60"/><path d="M21.04 27.80v3.3" stroke="#1e8df2" stroke-width="0.60"/><path d="M25.13 27.80v3.3" stroke="#1e8df2" stroke-width="0.60"/><path d="M29.21 27.80v3.3" stroke="#1e8df2" stroke-width="0.60"/><rect x="0.5" y="3.80" width="37" height="24.0" fill="#41a8ff" stroke="#1e8df2" stroke-width="0.75"/><path d="M0.5 24.30L7.8 17.00L18.2 20.40L25.8 8.80L31.7 17.40L37.5 17.40" fill="none" stroke="#1e8df2" stroke-width="0.64"/><circle cx="7.8" cy="17.00" r="1.25" fill="#1e8df2"/><circle cx="18.2" cy="20.40" r="1.25" fill="#1e8df2"/><circle cx="25.8" cy="8.80" r="1.25" fill="#1e8df2"/><circle cx="31.7" cy="17.40" r="1.25" fill="#1e8df2"/></svg>
<div class="t" style="left:223px;top:97px;font-size:13px;color:#000;">System Memory</div>
<div class="t" style="left:223px;top:116px;font-size:11px;color:#000;letter-spacing:0.22px;">Monitors the maximum and used memory of the system, and</div>
<div class="t" style="left:223px;top:129px;font-size:11px;color:#000;letter-spacing:0.22px;">the memory used by a process used in KB.</div>
<div class="t" style="left:223px;top:160px;font-size:11px;color:#000;letter-spacing:0.2px;">Page</div>
<div class="t" style="left:319px;top:160px;font-size:11px;color:#000;letter-spacing:0.2px;">Timeline</div>
<svg style="position:absolute;left:581px;top:112px" width="20" height="20" viewBox="0 0 20 20" ><circle cx="10" cy="10" r="9.4" fill="#e6e6e6" stroke="#b4b4b4" stroke-width="1"/><path d="M10 8.3v6.4" stroke="#a4a4a4" stroke-width="1.5"/><circle cx="10" cy="5.6" r="0.95" fill="#a4a4a4"/></svg>
<svg style="position:absolute;left:145px;top:220.60000000000002px" width="56" height="46.87" viewBox="0 0 38 31.8" ><rect x="4.7" y="0.50" width="28.6" height="3.3" fill="#fff" stroke="#707070" stroke-width="0.75"/><path d="M8.79 0.50v3.3" stroke="#707070" stroke-width="0.60"/><path d="M12.87 0.50v3.3" stroke="#707070" stroke-width="0.60"/><path d="M16.96 0.50v3.3" stroke="#707070" stroke-width="0.60"/><path d="M21.04 0.50v3.3" stroke="#707070" stroke-width="0.60"/><path d="M25.13 0.50v3.3" stroke="#707070" stroke-width="0.60"/><path d="M29.21 0.50v3.3" stroke="#707070" stroke-width="0.60"/><rect x="4.7" y="27.80" width="28.6" height="3.3" fill="#fff" stroke="#707070" stroke-width="0.75"/><path d="M8.79 27.80v3.3" stroke="#707070" stroke-width="0.60"/><path d="M12.87 27.80v3.3" stroke="#707070" stroke-width="0.60"/><path d="M16.96 27.80v3.3" stroke="#707070" stroke-width="0.60"/><path d="M21.04 27.80v3.3" stroke="#707070" stroke-width="0.60"/><path d="M25.13 27.80v3.3" stroke="#707070" stroke-width="0.60"/><path d="M29.21 27.80v3.3" stroke="#707070" stroke-width="0.60"/><rect x="0.5" y="3.80" width="37" height="24.0" fill="#dcdcdc" stroke="#707070" stroke-width="0.75"/><rect x="16.6" y="6.30" width="8.6" height="8.26" fill="#fff" stroke="#707070" stroke-width="0.64"/><rect x="27.0" y="6.30" width="8.6" height="8.26" fill="#f4f4f4" stroke="#707070" stroke-width="0.64"/><rect x="16.6" y="16.28" width="8.6" height="8.26" fill="#f4f4f4" stroke="#707070" stroke-width="0.64"/><rect x="27.0" y="16.28" width="8.6" height="8.26" fill="#fff" stroke="#707070" stroke-width="0.64"/></svg>
<div class="t" style="left:223px;top:217px;font-size:13px;color:#505050;">Process Size</div>
<div class="t" style="left:223px;top:236px;font-size:11px;color:#505050;letter-spacing:0.22px;">Monitors a partition of the PSS, 3D, and GEM memory of</div>
<div class="t" style="left:223px;top:249px;font-size:11px;color:#505050;letter-spacing:0.22px;">a process in KB.</div>
<div class="t" style="left:223px;top:280px;font-size:11px;color:#505050;letter-spacing:0.2px;">Page</div>
<div class="t" style="left:319px;top:280px;font-size:11px;color:#505050;letter-spacing:0.2px;">Timeline</div>
<svg style="position:absolute;left:581px;top:232px" width="20" height="20" viewBox="0 0 20 20" ><circle cx="10" cy="10" r="9.4" fill="#e6e6e6" stroke="#b4b4b4" stroke-width="1"/><path d="M10 8.3v6.4" stroke="#a4a4a4" stroke-width="1.5"/><circle cx="10" cy="5.6" r="0.95" fill="#a4a4a4"/></svg>
<svg style="position:absolute;left:145px;top:340.6px" width="56" height="46.87" viewBox="0 0 38 31.8" ><rect x="4.7" y="0.50" width="28.6" height="3.3" fill="#fff" stroke="#707070" stroke-width="0.75"/><path d="M8.79 0.50v3.3" stroke="#707070" stroke-width="0.60"/><path d="M12.87 0.50v3.3" stroke="#707070" stroke-width="0.60"/><path d="M16.96 0.50v3.3" stroke="#707070" stroke-width="0.60"/><path d="M21.04 0.50v3.3" stroke="#707070" stroke-width="0.60"/><path d="M25.13 0.50v3.3" stroke="#707070" stroke-width="0.60"/><path d="M29.21 0.50v3.3" stroke="#707070" stroke-width="0.60"/><rect x="4.7" y="27.80" width="28.6" height="3.3" fill="#fff" stroke="#707070" stroke-width="0.75"/><path d="M8.79 27.80v3.3" stroke="#707070" stroke-width="0.60"/><path d="M12.87 27.80v3.3" stroke="#707070" stroke-width="0.60"/><path d="M16.96 27.80v3.3" stroke="#707070" stroke-width="0.60"/><path d="M21.04 27.80v3.3" stroke="#707070" stroke-width="0.60"/><path d="M25.13 27.80v3.3" stroke="#707070" stroke-width="0.60"/><path d="M29.21 27.80v3.3" stroke="#707070" stroke-width="0.60"/><rect x="0.5" y="3.80" width="37" height="24.0" fill="#dcdcdc" stroke="#707070" stroke-width="0.75"/><rect x="16.6" y="6.30" width="8.6" height="8.26" fill="#fff" stroke="#707070" stroke-width="0.64"/><rect x="27.0" y="6.30" width="8.6" height="8.26" fill="#f4f4f4" stroke="#707070" stroke-width="0.64"/><rect x="16.6" y="16.28" width="8.6" height="8.26" fill="#f4f4f4" stroke="#707070" stroke-width="0.64"/><rect x="27.0" y="16.28" width="8.6" height="8.26" fill="#fff" stroke="#707070" stroke-width="0.64"/><path d="M31.3 13.02V8.02M29.0 10.12L31.3 7.82L33.6 10.12" fill="none" stroke="#707070" stroke-width="0.75"/><path d="M20.900000000000002 17.81V22.81M18.6 20.71L20.900000000000002 23.01L23.200000000000003 20.71" fill="none" stroke="#707070" stroke-width="0.75"/></svg>
<div class="t" style="left:223px;top:337px;font-size:13px;color:#505050;">Heap Allocation</div>
<div class="t" style="left:223px;top:356px;font-size:11px;color:#505050;letter-spacing:0.22px;">Records all memory allocations and frees the requested</div>
<div class="t" style="left:223px;top:369px;font-size:11px;color:#505050;letter-spacing:0.22px;">allocations from the executable and shared libraries.</div>
<div class="t" style="left:223px;top:382px;font-size:11px;color:#505050;letter-spacing:0.22px;">This Feature shows un-freed allocations (leak candidates).</div>
<div class="t" style="left:223px;top:407px;font-size:11px;color:#505050;letter-spacing:0.2px;">Page</div>
<div class="t" style="left:319px;top:407px;font-size:11px;color:#505050;letter-spacing:0.2px;">Memory</div>
<svg style="position:absolute;left:581px;top:352px" width="20" height="20" viewBox="0 0 20 20" ><circle cx="10" cy="10" r="9.4" fill="#e6e6e6" stroke="#b4b4b4" stroke-width="1"/><path d="M10 8.3v6.4" stroke="#a4a4a4" stroke-width="1.5"/><circle cx="10" cy="5.6" r="0.95" fill="#a4a4a4"/></svg>
<div class="r" style="left:128px;top:425px;width:486px;height:119px;background:#cce8ff;"></div>
<svg style="position:absolute;left:152px;top:456px" width="41" height="56" viewBox="0 0 28 38" ><rect x="0.5" y="0.5" width="27" height="37" fill="#41a8ff" stroke="#1e8df2"/><path d="M27.5 25.5H21C18 25.5 17.5 31 12 31H0.5V37.5H27.5z" fill="#6cbcff" stroke="#1e8df2" stroke-width="0.8"/><circle cx="13.8" cy="17.4" r="10" fill="#fff" stroke="#1e8df2" stroke-width="0.9"/><circle cx="13.8" cy="17.4" r="3.2" fill="#41a8ff" stroke="#1e8df2" stroke-width="0.9"/><circle cx="3.3" cy="3.3" r="1.2" fill="#fff" stroke="#1e8df2" stroke-width="0.7"/><circle cx="24.7" cy="3.3" r="1.2" fill="#fff" stroke="#1e8df2" stroke-width="0.7"/><circle cx="3.3" cy="34.3" r="1.2" fill="#fff" stroke="#1e8df2" stroke-width="0.7"/><circle cx="24.7" cy="34.3" r="1.2" fill="#fff" stroke="#1e8df2" stroke-width="0.7"/></svg>
<div class="t" style="left:223px;top:457px;font-size:13px;color:#000;">Disk IO</div>
<div class="t" style="left:223px;top:476px;font-size:11px;color:#000;letter-spacing:0.22px;">Shows the system I/O events, such as the occurrence of</div>
<div class="t" style="left:223px;top:489px;font-size:11px;color:#000;letter-spacing:0.22px;">the read/write operation and the number of bytes in it.</div>
<div class="t" style="left:223px;top:520px;font-size:11px;color:#000;letter-spacing:0.2px;">Page</div>
<div class="t" style="left:319px;top:520px;font-size:11px;color:#000;letter-spacing:0.2px;">Timeline</div>
<svg style="position:absolute;left:581px;top:472px" width="20" height="20" viewBox="0 0 20 20" ><circle cx="10" cy="10" r="9.4" fill="#e6e6e6" stroke="#b4b4b4" stroke-width="1"/><path d="M10 8.3v6.4" stroke="#a4a4a4" stroke-width="1.5"/><circle cx="10" cy="5.6" r="0.95" fill="#a4a4a4"/></svg>
<div class="r" style="left:615px;top:65px;width:16px;height:487px;background:#f0f0f0;"></div>
<div class="r" style="left:615px;top:162px;width:15px;height:108px;background:#c9c9c9;"></div>
<svg style="position:absolute;left:618px;top:70px" width="10" height="8" viewBox="0 0 10 8" ><path d="M1 6.5L5 2.5L9 6.5" fill="none" stroke="#505050" stroke-width="2"/></svg>
<svg style="position:absolute;left:618px;top:540px" width="10" height="8" viewBox="0 0 10 8" ><path d="M1 1.5L5 5.5L9 1.5" fill="none" stroke="#505050" stroke-width="2"/></svg>
<div class="r" style="left:631px;top:65px;width:212px;height:487px;overflow:hidden"><div class="t" style="left:65px;top:44px;font-size:13px;color:#505050;">OpenGL ES</div><svg style="position:absolute;left:185.9000000000001px;top:41.80000000000001px" width="15" height="15" viewBox="0 0 15 15" ><circle cx="7.5" cy="7.5" r="7.5" fill="#f07b7b"/><path d="M5.2 5.2l4.6 4.6M9.8 5.2l-4.6 4.6" stroke="#fff" stroke-width="1.1"/></svg><svg style="position:absolute;left:10.599999999999909px;top:40.5px" width="39" height="18" viewBox="0 0 39 18" ><ellipse cx="13.6" cy="9" rx="13.6" ry="8.4" fill="#0a84e8"/><ellipse cx="16.3" cy="9" rx="10.3" ry="5.6" fill="#fff"/><text x="5.4" y="12.4" font-family="Liberation Sans,sans-serif" font-weight="bold" font-size="10.5" fill="#0a84e8" textLength="32.8" lengthAdjust="spacingAndGlyphs">OpenGL</text></svg><div class="t" style="left:65px;top:107px;font-size:13px;color:#505050;">Power Estimation</div><svg style="position:absolute;left:185.9000000000001px;top:104.80000000000001px" width="15" height="15" viewBox="0 0 15 15" ><circle cx="7.5" cy="7.5" r="7.5" fill="#f07b7b"/><path d="M5.2 5.2l4.6 4.6M9.8 5.2l-4.6 4.6" stroke="#fff" stroke-width="1.1"/></svg><svg style="position:absolute;left:12px;top:95.0px" width="36" height="36" viewBox="0 0 36 36" ><rect x="0.5" y="0.5" width="35" height="35" fill="#fff" stroke="#1e8df2"/><path d="M0.5 0.5H35.5V15.3Q18 2.2 0.5 15.3z" fill="#41a8ff" stroke="#1e8df2" stroke-width="0.8"/><path d="M0.5 18.6Q18 5.2 35.5 18.6M18 9.2v2.4M4.8 13.2l1.6 1.8M31.2 13.2l-1.6 1.8" fill="none" stroke="#1e8df2" stroke-width="0.9"/><path d="M6.9 35.5A11.1 11.1 0 0 1 29.1 35.5z" fill="#41a8ff" stroke="#1e8df2" stroke-width="0.8"/><path d="M19.5 33.5L30.3 16.5" stroke="#1e8df2" stroke-width="1.3"/><rect x="15.8" y="33.2" width="4" height="2.3" fill="#8cccff"/><text x="18" y="21.3" text-anchor="middle" font-family="Liberation Sans,sans-serif" font-weight="bold" font-size="7.5" fill="#1e8df2">A</text></svg><div class="t" style="left:65px;top:170px;font-size:13px;color:#505050;">Network IO</div><svg style="position:absolute;left:185.9000000000001px;top:167.8px" width="15" height="15" viewBox="0 0 15 15" ><circle cx="7.5" cy="7.5" r="7.5" fill="#f07b7b"/><path d="M5.2 5.2l4.6 4.6M9.8 5.2l-4.6 4.6" stroke="#fff" stroke-width="1.1"/></svg><svg style="position:absolute;left:9.5px;top:156.0px" width="41" height="40" viewBox="0 0 41 40" ><path d="M12.67 5.93A9.0 9.0 0 0 0 12.67 15.47" fill="none" stroke="#1e8df2" stroke-width="0.9"/><path d="M27.93 5.93A9.0 9.0 0 0 1 27.93 15.47" fill="none" stroke="#1e8df2" stroke-width="0.9"/><path d="M8.09 3.07A14.4 14.4 0 0 0 8.09 18.33" fill="none" stroke="#1e8df2" stroke-width="0.9"/><path d="M32.51 3.07A14.4 14.4 0 0 1 32.51 18.33" fill="none" stroke="#1e8df2" stroke-width="0.9"/><path d="M3.68 0.31A19.6 19.6 0 0 0 3.68 21.09" fill="none" stroke="#1e8df2" stroke-width="0.9"/><path d="M36.92 0.31A19.6 19.6 0 0 1 36.92 21.09" fill="none" stroke="#1e8df2" stroke-width="0.9"/><path d="M19.1 15L11.3 39H14.700000000000001L20.3 34.2L25.9 39H29.3L21.5 15z" fill="#41a8ff" stroke="#1e8df2" stroke-width="0.9" stroke-linejoin="round"/><path d="M20.3 19L16.900000000000002 30.5L20.3 33L23.7 30.5z" fill="#fff" stroke="#1e8df2" stroke-width="0.8" stroke-linejoin="round"/><circle cx="15.700000000000001" cy="34.6" r="1.25" fill="#fff" stroke="#1e8df2" stroke-width="0.7"/><circle cx="24.9" cy="34.6" r="1.25" fill="#fff" stroke="#1e8df2" stroke-width="0.7"/><circle cx="20.3" cy="10.7" r="4.4" fill="#fff" stroke="#1e8df2" stroke-width="1"/></svg><div class="t" style="left:65px;top:233px;font-size:13px;color:#505050;">Disk IO</div><svg style="position:absolute;left:185.9000000000001px;top:230.79999999999995px" width="15" height="15" viewBox="0 0 15 15" ><circle cx="7.5" cy="7.5" r="7.5" fill="#f07b7b"/><path d="M5.2 5.2l4.6 4.6M9.8 5.2l-4.6 4.6" stroke="#fff" stroke-width="1.1"/></svg><svg style="position:absolute;left:16px;top:220.0px" width="28" height="38" viewBox="0 0 28 38" ><rect x="0.5" y="0.5" width="27" height="37" fill="#41a8ff" stroke="#1e8df2"/><path d="M27.5 25.5H21C18 25.5 17.5 31 12 31H0.5V37.5H27.5z" fill="#6cbcff" stroke="#1e8df2" stroke-width="0.8"/><circle cx="13.8" cy="17.4" r="10" fill="#fff" stroke="#1e8df2" stroke-width="0.9"/><circle cx="13.8" cy="17.4" r="3.2" fill="#41a8ff" stroke="#1e8df2" stroke-width="0.9"/><circle cx="3.3" cy="3.3" r="1.2" fill="#fff" stroke="#1e8df2" stroke-width="0.7"/><circle cx="24.7" cy="3.3" r="1.2" fill="#fff" stroke="#1e8df2" stroke-width="0.7"/><circle cx="3.3" cy="34.3" r="1.2" fill="#fff" stroke="#1e8df2" stroke-width="0.7"/><circle cx="24.7" cy="34.3" r="1.2" fill="#fff" stroke="#1e8df2" stroke-width="0.7"/></svg><div class="t" style="left:65px;top:296px;font-size:13px;color:#505050;">CPU Usage</div><svg style="position:absolute;left:185.9000000000001px;top:293.79999999999995px" width="15" height="15" viewBox="0 0 15 15" ><circle cx="7.5" cy="7.5" r="7.5" fill="#f07b7b"/><path d="M5.2 5.2l4.6 4.6M9.8 5.2l-4.6 4.6" stroke="#fff" stroke-width="1.1"/></svg><svg style="position:absolute;left:11px;top:283.0px" width="38" height="38" viewBox="0 0 38 38" ><rect x="0.5" y="0.5" width="37" height="37" fill="#fff" stroke="#1e8df2"/><path d="M11.5 4.5H33.5V33.5H4.5V11.5z" fill="#41a8ff" stroke="#1e8df2"/><path d="M4.5 4.5h3.6l-3.6 3.6z" fill="#1e8df2" fill-opacity="0.55" stroke="#1e8df2" stroke-width="0.9"/></svg><div class="t" style="left:65px;top:359px;font-size:13px;color:#505050;">Core Usage</div><svg style="position:absolute;left:185.9000000000001px;top:356.79999999999995px" width="15" height="15" viewBox="0 0 15 15" ><circle cx="7.5" cy="7.5" r="7.5" fill="#f07b7b"/><path d="M5.2 5.2l4.6 4.6M9.8 5.2l-4.6 4.6" stroke="#fff" stroke-width="1.1"/></svg><svg style="position:absolute;left:11px;top:346.0px" width="38" height="38" viewBox="0 0 38 38" ><rect x="0.5" y="0.5" width="37" height="37" fill="#fff" stroke="#1e8df2"/><path d="M11.5 4.5H17.5V17.5H4.5V11.5z" fill="#fff" stroke="#1e8df2"/><path d="M4.5 4.5h3.6l-3.6 3.6z" fill="#1e8df2" fill-opacity="0.55" stroke="#1e8df2" stroke-width="0.9"/><rect x="20.5" y="4.5" width="13" height="13" fill="#41a8ff" stroke="#1e8df2"/><rect x="4.5" y="20.5" width="13" height="13" fill="#41a8ff" stroke="#1e8df2"/><rect x="20.5" y="20.5" width="13" height="13" fill="#fff" stroke="#1e8df2"/></svg><div class="t" style="left:65px;top:422px;font-size:13px;color:#505050;">CPU Frequency</div><svg style="position:absolute;left:185.9000000000001px;top:419.79999999999995px" width="15" height="15" viewBox="0 0 15 15" ><circle cx="7.5" cy="7.5" r="7.5" fill="#f07b7b"/><path d="M5.2 5.2l4.6 4.6M9.8 5.2l-4.6 4.6" stroke="#fff" stroke-width="1.1"/></svg><svg style="position:absolute;left:11px;top:409.0px" width="38" height="38" viewBox="0 0 38 38" ><rect x="0.5" y="0.5" width="37" height="37" fill="#fff" stroke="#1e8df2"/><path d="M11.5 4.5H33.5V33.5H4.5V11.5z" fill="#41a8ff" stroke="#1e8df2"/><path d="M4.5 4.5h3.6l-3.6 3.6z" fill="#1e8df2" fill-opacity="0.55" stroke="#1e8df2" stroke-width="0.9"/><path d="M4.5 21H13.5L17.5 25L24 14L28.5 20.5H33.5" fill="none" stroke="#1e8df2" stroke-width="1"/></svg><div class="t" style="left:65px;top:485px;font-size:13px;color:#505050;">System Memory</div><svg style="position:absolute;left:185.9000000000001px;top:482.79999999999995px" width="15" height="15" viewBox="0 0 15 15" ><circle cx="7.5" cy="7.5" r="7.5" fill="#f07b7b"/><path d="M5.2 5.2l4.6 4.6M9.8 5.2l-4.6 4.6" stroke="#fff" stroke-width="1.1"/></svg><svg style="position:absolute;left:11px;top:475.0px" width="38" height="32" viewBox="0 0 38 32" ><rect x="4.7" y="0.50" width="28.6" height="3.0" fill="#fff" stroke="#1e8df2" stroke-width="1.0"/><path d="M8.79 0.50v3.0" stroke="#1e8df2" stroke-width="0.80"/><path d="M12.87 0.50v3.0" stroke="#1e8df2" stroke-width="0.80"/><path d="M16.96 0.50v3.0" stroke="#1e8df2" stroke-width="0.80"/><path d="M21.04 0.50v3.0" stroke="#1e8df2" stroke-width="0.80"/><path d="M25.13 0.50v3.0" stroke="#1e8df2" stroke-width="0.80"/><path d="M29.21 0.50v3.0" stroke="#1e8df2" stroke-width="0.80"/><rect x="4.7" y="28.50" width="28.6" height="3.0" fill="#fff" stroke="#1e8df2" stroke-width="1.0"/><path d="M8.79 28.50v3.0" stroke="#1e8df2" stroke-width="0.80"/><path d="M12.87 28.50v3.0" stroke="#1e8df2" stroke-width="0.80"/><path d="M16.96 28.50v3.0" stroke="#1e8df2" stroke-width="0.80"/><path d="M21.04 28.50v3.0" stroke="#1e8df2" stroke-width="0.80"/><path d="M25.13 28.50v3.0" stroke="#1e8df2" stroke-width="0.80"/><path d="M29.21 28.50v3.0" stroke="#1e8df2" stroke-width="0.80"/><rect x="0.5" y="3.50" width="37" height="25.0" fill="#41a8ff" stroke="#1e8df2" stroke-width="1.0"/><path d="M0.5 24.50L10.8 18.70L18.8 23.00L26 11.50L31 19.00L37.5 19.00" fill="none" stroke="#1e8df2" stroke-width="0.85"/><circle cx="10.8" cy="18.70" r="1.25" fill="#1e8df2"/><circle cx="18.8" cy="23.00" r="1.25" fill="#1e8df2"/><circle cx="26" cy="11.50" r="1.25" fill="#1e8df2"/><circle cx="31" cy="19.00" r="1.25" fill="#1e8df2"/></svg></div>
<div class="r" style="left:843px;top:65px;width:15px;height:487px;background:#f0f0f0;"></div>
<div class="r" style="left:843px;top:83px;width:15px;height:431px;background:#c9c9c9;"></div>
<svg style="position:absolute;left:845.5px;top:70px" width="10" height="8" viewBox="0 0 10 8" ><path d="M1 6.5L5 2.5L9 6.5" fill="none" stroke="#505050" stroke-width="2"/></svg>
<svg style="position:absolute;left:845.5px;top:540px" width="10" height="8" viewBox="0 0 10 8" ><path d="M1 1.5L5 5.5L9 1.5" fill="none" stroke="#505050" stroke-width="2"/></svg>
<div class="r" style="left:0px;top:556px;width:858px;height:1px;background:#a0a0a0;"></div>
<div class="r" style="left:642px;top:560px;width:98px;height:23px;background:#e1e1e1;box-sizing:border-box;border:1px solid #adadad"></div>
<div class="t" style="left:642px;top:565px;font-size:13px;color:#000;width:98px;text-align:center;">Cancel</div>
<div class="r" style="left:750px;top:560px;width:98px;height:23px;background:#e1e1e1;box-sizing:border-box;border:1px solid #adadad"></div>
<div class="t" style="left:750px;top:565px;font-size:13px;color:#000;width:98px;text-align:center;">OK</div></div>
<div class="r" style="left:0;top:0;width:1328px;height:875px;border:1px solid #0a7ad8;pointer-events:none"></div>
</body></html>
